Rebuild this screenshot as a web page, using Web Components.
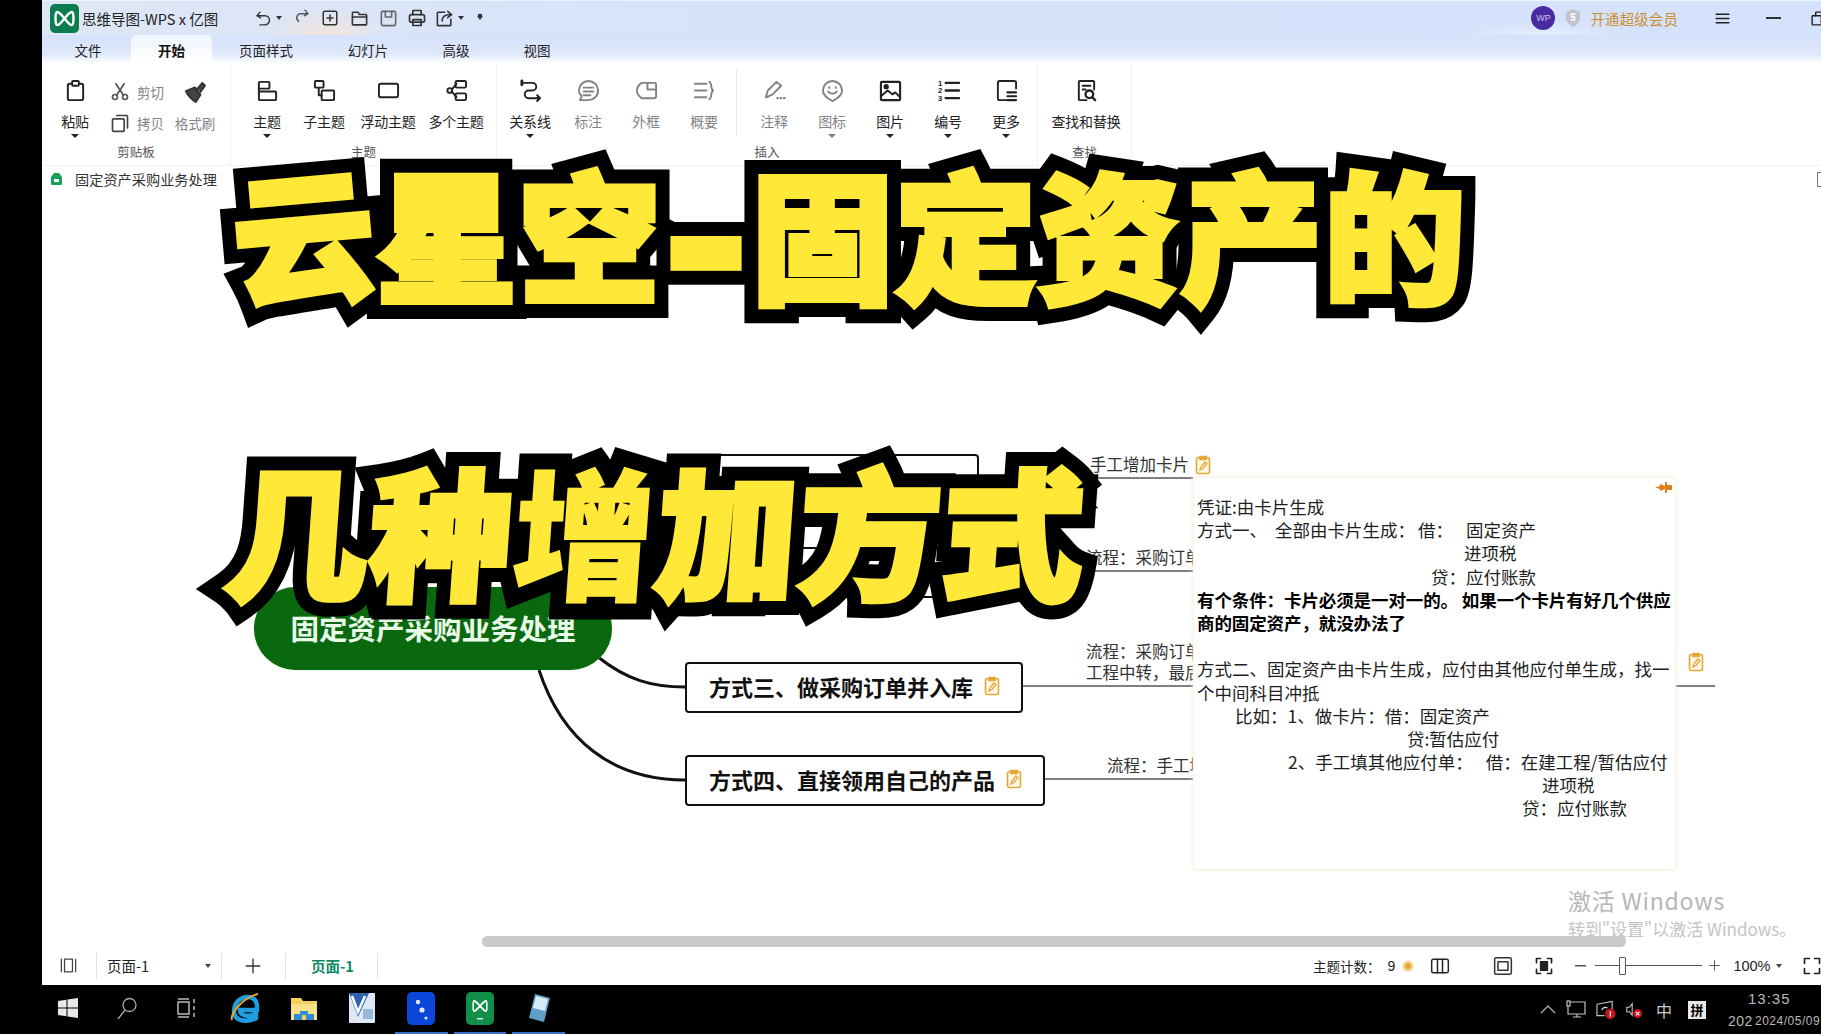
<!DOCTYPE html>
<html lang="zh">
<head>
<meta charset="utf-8">
<title>思维导图</title>
<style>
  html, body { margin: 0; height: 100%; background: #000; overflow: hidden; }
  body { font-family: "Noto Sans CJK SC", "Noto Sans", sans-serif; color: #222; }
</style>
</head>
<body>
<app-shell>
  <title-bar slot="top"></title-bar>
  <ribbon-tabs slot="top" active="开始"></ribbon-tabs>
  <ribbon-bar slot="top">
    <rb-group label="剪贴板" w="188" pad="0">
      <rb-btn w="64" icon="paste" label="粘贴" arrow style="margin-left:1px"></rb-btn>
      <clip-tools></clip-tools>
    </rb-group>
    <rb-group label="主题" w="266" pad="8" sep>
      <rb-btn w="56" icon="topic" label="主题" arrow></rb-btn>
      <rb-btn w="58" icon="subtopic" label="子主题"></rb-btn>
      <rb-btn w="70" icon="float" label="浮动主题"></rb-btn>
      <rb-btn w="66" icon="multi" label="多个主题"></rb-btn>
    </rb-group>
    <rb-group label="插入" w="541" pad="4" sep>
      <rb-btn w="58" icon="relation" label="关系线" arrow></rb-btn>
      <rb-btn w="58" icon="callout" label="标注" grey></rb-btn>
      <rb-btn w="58" icon="frame" label="外框" grey></rb-btn>
      <rb-btn w="58" icon="summary" label="概要" grey></rb-btn>
      <i class="rule"></i>
      <rb-btn w="58" icon="note" label="注释" grey></rb-btn>
      <rb-btn w="58" icon="pin" label="图标" grey arrow></rb-btn>
      <rb-btn w="58" icon="image" label="图片" arrow></rb-btn>
      <rb-btn w="58" icon="number" label="编号" arrow></rb-btn>
      <rb-btn w="58" icon="more" label="更多" arrow></rb-btn>
    </rb-group>
    <rb-group label="查找" w="95" pad="8" sep end>
      <rb-btn w="80" icon="find" label="查找和替换"></rb-btn>
    </rb-group>
  </ribbon-bar>
  <doc-tab slot="top">固定资产采购业务处理</doc-tab>
  <map-canvas slot="top"></map-canvas>
  <status-bar slot="top"></status-bar>
  <task-bar slot="bottom"></task-bar>
  <big-headline slot="over" text="云星空-固定资产的" x="232" y="143" step="143" tilt="-5"></big-headline>
  <big-headline slot="over" text="几种增加方式" x="221" y="440" step="143" skew="-4"></big-headline>
</app-shell>

<script>
const CJK = '"Noto Sans CJK SC", "Noto Sans", sans-serif';

// icons, all on a 24 box
const ICONS = {
  paste: '<rect x="4" y="5" width="16" height="17" rx="2"/><rect x="8.5" y="2" width="7" height="5" rx="1" fill="#fff"/>',
  cut: '<circle cx="6" cy="18" r="3"/><circle cx="18" cy="18" r="3"/><path d="M8 15.5 17 2M16 15.5 7 2"/>',
  copy: '<rect x="3" y="7" width="14" height="15" rx="1"/><path d="M8 3h12a1 1 0 0 1 1 1v14"/>',
  brush: '<path d="M2 11 12 7l6 8-5 8c-3-1-9-7-11-12z" fill="currentColor"/><path d="m14 9 6-7 3 3-5 7" fill="currentColor"/>',
  topic: '<rect x="3" y="3" width="11" height="7" rx="1"/><path d="M3 10v5"/><rect x="3" y="13" width="18" height="9" rx="1"/>',
  subtopic: '<rect x="2" y="2" width="9" height="7" rx="1"/><path d="M6 9v8h3"/><rect x="9" y="12" width="13" height="10" rx="1"/>',
  float: '<rect x="2" y="5" width="20" height="14" rx="2"/>',
  multi: '<circle cx="5" cy="12" r="2.5"/><path d="M7 11l5-6M7 13l5 6"/><rect x="11" y="2" width="11" height="7" rx="1.5"/><rect x="11" y="15" width="11" height="7" rx="1.5"/>',
  relation: '<path d="M3 4h11a4 4 0 0 1 0 8h-4a4 4 0 0 0 0 8h11"/><path d="M3 2v4" stroke-width="3"/><path d="m19 17 3 3-3 3" fill="currentColor"/>',
  callout: '<path d="M12 2a10 10 0 0 1 10 10c0 6-5 10-10 10H3l2-4C3 16 2 14 2 12A10 10 0 0 1 12 2z"/><path d="M7 9h10M7 13h10M7 17h7"/>',
  frame: '<path d="M7 4h13a2 2 0 0 1 2 2v12a2 2 0 0 1-2 2H7c-3-2-5-5-5-8s2-6 5-8z"/><path d="M13 4v7h9"/>',
  summary: '<path d="M2 5h12M2 12h12M2 19h12M17 3c3 0 1 8 4 9-3 1-1 9-4 9"/>',
  note: '<path d="M3 19l2-7L14 3l5 4-9 9-6 3z"/><path d="M15 20h.5M18.5 20h.5M22 20h.5" stroke-width="2.4"/>',
  pin: '<path d="M12 2a10 10 0 0 1 10 10c0 5-6 9-10 11C8 21 2 17 2 12A10 10 0 0 1 12 2z"/><path d="M7.5 13c2 3 7 3 9 0"/><path d="M8.5 8.5v1M15.5 8.5v1"/>',
  image: '<rect x="2" y="3" width="20" height="19" rx="1" stroke-width="2.2"/><circle cx="7.5" cy="8" r="1.8" fill="currentColor"/><path d="M2 18l7-6 5 4 3-2 5 5"/>',
  number: '<path d="M9 4h14M9 12h14M9 20h14" stroke-width="2.4"/><text x="1" y="7" font-size="8" font-weight="700" fill="currentColor" stroke="none" font-family="Liberation Sans">1</text><text x="1" y="15" font-size="8" font-weight="700" fill="currentColor" stroke="none" font-family="Liberation Sans">2</text><text x="1" y="23" font-size="8" font-weight="700" fill="currentColor" stroke="none" font-family="Liberation Sans">3</text>',
  more: '<path d="M22 10V4a2 2 0 0 0-2-2H5a2 2 0 0 0-2 2v16a2 2 0 0 0 2 2h7"/><path d="M13 14h9M13 18h9M13 22h9" stroke-width="2.2"/>',
  find: '<path d="M12 22H5a1 1 0 0 1-1-1V3a1 1 0 0 1 1-1h14a1 1 0 0 1 1 1v8"/><path d="M8 7h8M8 11h3"/><circle cx="15" cy="16" r="4" stroke-width="2.4"/><path d="m18 19 3 3" stroke-width="2.4"/>',
  undo: '<path d="M7 3 3 8l5 3"/><path d="M3 8h11a6 6 0 0 1 0 13H7"/>',
  redo: '<path d="M17 3l4 5-5 3"/><path d="M21 8H11a6 6 0 0 0-3 11"/>',
  addbox: '<rect x="3" y="3" width="18" height="18" rx="2"/><path d="M12 8v8M8 12h8"/>',
  folder: '<path d="M3 8V5a1 1 0 0 1 1-1h6l2 3h8a1 1 0 0 1 1 1v11a1 1 0 0 1-1 1H4a1 1 0 0 1-1-1z"/><path d="M3 10h18"/>',
  save: '<rect x="3" y="3" width="18" height="18" rx="2"/><path d="M8 3v7h8V3"/>',
  print: '<path d="M7 8V3h10v5"/><rect x="3" y="8" width="18" height="9" rx="2"/><rect x="7" y="14" width="10" height="7"/>',
  share: '<path d="M12 4H4a1 1 0 0 0-1 1v15a1 1 0 0 0 1 1h15a1 1 0 0 0 1-1v-7"/><path d="M9 15c0-5 4-8 11-8M16 3l5 4-5 4"/>',
  menu: '<path d="M3 6h18M3 12h18M3 18h18"/>',
  restore: '<rect x="3" y="8" width="13" height="13" rx="1"/><path d="M8 8V4a1 1 0 0 1 1-1h11a1 1 0 0 1 1 1v11a1 1 0 0 1-1 1h-4"/>',
  pages: '<path d="M3 4v16M21 4v16"/><rect x="7" y="4" width="10" height="16"/>',
  plus: '<path d="M12 3v18M3 12h18"/>',
  book: '<rect x="2" y="4" width="20" height="16" rx="2"/><path d="M9 4v16M15 4v16"/>',
  fit: '<rect x="2" y="2" width="20" height="20" rx="2"/><rect x="6" y="7" width="12" height="10"/>',
  focus: '<path d="M3 8V3h5M16 3h5v5M21 16v5h-5M8 21H3v-5"/><rect x="8" y="7" width="8" height="10" fill="currentColor"/>',
  full: '<path d="M3 9V3h6M15 3h6v6M21 15v6h-6M9 21H3v-6"/>'
};

function def(name, css, html, extra) {
  customElements.define(name, class extends HTMLElement {
    constructor() {
      super();
      this.attachShadow({ mode: 'open' });
    }
    connectedCallback() {
      const body = typeof html === 'function' ? html(this) : html;
      this.shadowRoot.innerHTML = `<style>${css}</style>${body}`;
      if (extra) extra(this);
    }
  });
}

function ico(name, size, color, sw) {
  return `<svg width="${size}" height="${size}" viewBox="0 0 24 24" fill="none" stroke="${color || 'currentColor'}" stroke-width="${sw || 2}" stroke-linecap="round" stroke-linejoin="round">${ICONS[name]}</svg>`;
}

const NOTE_ICON = `<svg width="16" height="20" viewBox="0 0 16 20" fill="#fff8e6" stroke="#e2a83a" stroke-width="1.6"><rect x="1.5" y="2.5" width="13" height="16" rx="2"/><path d="M5 1.5h6v3H5z" fill="#e2a83a"/><path d="m5 15 1-3 4-5 2 1.5-4 5z" fill="none" stroke-width="1.3"/></svg>`;

def('app-shell', `
  :host { display: grid; grid-template-columns: 42px 1fr; grid-template-rows: 985px 49px; width: 1821px; height: 1034px; position: relative; overflow: hidden; background: #000; }
  .main { grid-column: 2; display: flex; flex-direction: column; background: #fff; min-height: 0; }
  .bottom { grid-column: 1 / 3; min-width: 0; }
`, `<div class="main"><slot name="top"></slot></div><div class="bottom"><slot name="bottom"></slot></div><slot name="over"></slot>`);

def('title-bar', `
  :host { display: flex; align-items: center; height: 35px; flex: none; font: 14.5px ${CJK}; color: #222;
    background:
      radial-gradient(ellipse 60px 26px at 285px 34px, #f3e5dc 0, transparent 100%),
      radial-gradient(ellipse 90px 22px at 1500px 40px, #eaf1fd 0, transparent 100%),
      linear-gradient(90deg, #dde7f5, #d8e2fb 40%, #d5e2fb);
    border-top: 1px solid #edf2fc; box-sizing: border-box; }
  .logo { width: 29px; height: 29px; margin-left: 8px; flex: none; }
  .name { margin-left: 3px; width: 139px; white-space: nowrap; }
  .tools { display: flex; align-items: center; margin-left: 34px; color: #333; }
  .tools > * { flex: none; }
  .caret { width: 0; height: 0; border: 3.5px solid transparent; border-top: 4px solid #333; border-bottom: 0; margin-left: 4px; }
  .right { margin-left: auto; display: flex; align-items: center; color: #222; }
  .wp { width: 24px; height: 24px; border-radius: 50%; background: #4a2aa3; color: #cfc2ee; font: 9px "Liberation Sans", sans-serif; display: flex; align-items: center; justify-content: center; }
  .shield { width: 16px; height: 18px; margin-left: 10px; }
  .vip { color: #cd8f33; margin-left: 9px; font-size: 14.4px; letter-spacing: .2px; white-space: nowrap; }
`, `
  <svg class="logo" viewBox="0 0 29 29"><rect width="29" height="29" rx="5" fill="#0c7d4f"/><path d="M7 8c3 0 5 4 7.500 6.500C12 17 10 21 7 21c-2 0-2-13 0-13zM22 8c-3 0-5 4-7.500 6.500C17 17 19 21 22 21c2 0 2-13 0-13z" fill="none" stroke="#fff" stroke-width="2.400"/></svg>
  <span class="name">思维导图-WPS x 亿图</span>
  <div class="tools">
    ${ico('undo', 17)}<i class="caret"></i>
    <span style="margin-left:11px">${ico('redo', 17, '#555')}</span>
    <span style="margin-left:11px;display:flex">${ico('addbox', 18)}</span>
    <span style="margin-left:11px;display:flex">${ico('folder', 19)}</span>
    <span style="margin-left:10px;display:flex">${ico('save', 19, '#666')}</span>
    <span style="margin-left:9px;display:flex">${ico('print', 20)}</span>
    <span style="margin-left:8px;display:flex">${ico('share', 19)}</span><i class="caret"></i>
    <i class="caret" style="margin-left:13px;box-shadow:0 -3px 0 -1px #333"></i>
  </div>
  <div class="right">
    <span class="wp">WP</span>
    <svg class="shield" viewBox="0 0 16 18"><path d="M8 0l7 3v6c0 4-3 7-7 9-4-2-7-5-7-9V3z" fill="#bfc4cc"/><path d="M10.500 5H6.500v3h3v3H5.500" fill="none" stroke="#fff" stroke-width="1.500"/></svg>
    <span class="vip">开通超级会员</span>
    <span style="margin-left:36px;display:flex">${ico('menu', 17)}</span>
    <span style="margin-left:35px;display:flex"><svg width="15" height="2"><rect width="15" height="2" fill="#333"/></svg></span>
    <span style="margin-left:29px;margin-right:-6px;display:flex">${ico('restore', 17)}</span>
  </div>
`);

def('ribbon-tabs', `
  :host { display: flex; height: 27px; flex: none; padding-left: 3px; font: 13.5px ${CJK}; color: #222; background: linear-gradient(#d5e2fb, #dfe8fb 70%, #f8fafe); }
  span { display: flex; align-items: center; justify-content: center; padding-top: 2px; box-sizing: border-box; }
  .on { background: linear-gradient(#eef3fd, #fff); border-radius: 5px 5px 0 0; font-weight: 700; color: #111; }
`, (el) => {
  const tabs = [['文件', 86], ['开始', 81], ['页面样式', 108], ['幻灯片', 96], ['高级', 80], ['视图', 82]];
  return tabs.map(([t, w]) => `<span style="width:${w}px" class="${t === el.getAttribute('active') ? 'on' : ''}">${t}</span>`).join('');
});

def('ribbon-bar', `
  :host { display: flex; height: 103px; flex: none; background: #fff; align-items: stretch; }
`, `<slot></slot>`);

def('rb-group', `
  :host { display: flex; flex-direction: column; flex: none; box-sizing: border-box; position: relative; }
  :host([sep]) { border-left: 1px solid #eef0f2; }
  :host([end]) { border-right: 1px solid #eef0f2; }
  .row { display: flex; flex: 1; min-height: 0; align-items: flex-start; }
  .cap { text-align: center; font-size: 12.5px; line-height: 16px; color: #555; height: 18px; margin-bottom: 3px; }
  ::slotted(.rule) { width: 1px; height: 66px; margin: 8px 8px 0 3px; background: #e6e8ea; flex: none; }
`, (el) => `
  <div class="row" style="padding-left:${el.getAttribute('pad')}px"><slot></slot></div>
  <div class="cap">${el.getAttribute('label')}</div>
`, (el) => { el.style.width = el.getAttribute('w') + 'px'; });

def('rb-btn', `
  :host { display: flex; flex-direction: column; align-items: center; flex: none; font: 14px ${CJK}; color: #222; padding-top: 17px; }
  :host([grey]) { color: #808488; }
  .lb { margin-top: 8px; line-height: 22px; white-space: nowrap; letter-spacing: -.2px; }
  svg { display: block; }
  .ar { width: 0; height: 0; border: 4px solid transparent; border-top: 4px solid currentColor; border-bottom: 0; margin-top: 2px; }
`, (el) => `
  ${ico(el.getAttribute('icon'), 23)}
  <span class="lb">${el.getAttribute('label')}</span>
  ${el.hasAttribute('arrow') ? '<i class="ar"></i>' : ''}
`, (el) => { el.style.width = el.getAttribute('w') + 'px'; });

def('clip-tools', `
  :host { display: grid; grid-template-columns: 60px 60px; grid-template-rows: 31px 31px; width: 120px; flex: none; font: 13.5px ${CJK}; color: #808488; padding-top: 14px; }
  div { display: flex; align-items: center; gap: 7px; white-space: nowrap; }
  .m { color: #555; display: flex; }
`, `
  <div style="padding-left:3px"><span class="m">${ico('cut', 20, '#555')}</span><span>剪切</span></div>
  <div style="justify-content:center;margin-right:4px;color:#444">${ico('brush', 22, '#333')}</div>
  <div style="padding-left:3px"><span class="m">${ico('copy', 20, '#444')}</span><span>拷贝</span></div>
  <div style="justify-content:center;margin-right:4px">格式刷</div>
`);

def('doc-tab', `
  :host { display: flex; align-items: center; height: 27px; flex: none; border-top: 1px solid #f2f2f2; box-sizing: border-box; font: 14.2px ${CJK}; color: #333; background: #fff; }
  svg { margin-left: 9px; margin-right: 13px; }
  .end { margin-left: auto; width: 3px; height: 13px; border: 1px solid #777; border-right: 0; }
`, `
  <svg width="11" height="12" viewBox="0 0 11 12"><path d="M3 0h5l3 4v7a1 1 0 0 1-1 1H1a1 1 0 0 1-1-1V4z" fill="#18a058"/><rect x="3" y="6" width="5" height="3" fill="#fff"/></svg>
  <slot></slot><i class="end"></i>
`);

def('map-canvas', `
  :host { display: block; position: relative; flex: 1; min-height: 0; background: #fff; overflow: hidden; font-family: ${CJK}; color: #222; }
  svg.lines { position: absolute; left: 0; top: 0; }
  .root { position: absolute; left: 212px; top: 395px; width: 358px; height: 83px; box-sizing: border-box; border-radius: 42px; background: #0a680e; color: #e9fbe9; font-size: 28.500px; font-weight: 700; display: flex; align-items: center; justify-content: center; white-space: nowrap; box-shadow: 0 0 1px #7ad07a; padding-bottom: 3px; }
  .node { position: absolute; left: 643px; height: 51px; box-sizing: border-box; border: 2.500px solid #111; border-radius: 4px; background: #fff; font-size: 22px; font-weight: 700; color: #111; display: flex; align-items: center; padding: 0 0 3px 22px; gap: 11px; white-space: nowrap; }
  .tx { position: absolute; font-size: 16.500px; line-height: 21px; color: #333; white-space: nowrap; }
  .ni { position: absolute; display: block; }
  .wm { position: absolute; left: 1526px; color: #b4b6b8; white-space: nowrap; }
  .bar { position: absolute; left: 440px; top: 744px; width: 1144px; height: 11px; border-radius: 6px; background: #c9c9c9; }
`, `
  <svg class="lines" width="1779" height="760" fill="none" stroke="#111">
    <path d="M556 465C585 488 610 495 643 495" stroke-width="3"/>
    <path d="M497 478C520 548 570 588 643 588" stroke-width="3"/>
    <path d="M937 286H1152M905 379H1152M981 494H1673M1003 587H1152" stroke="#555" stroke-width="1.500"/>
  </svg>
  <div class="node" style="top:262px;width:294px"></div>
  <div class="node" style="top:355px;width:262px"></div>
  <div class="node" style="top:470px;width:338px">方式三、做采购订单并入库${NOTE_ICON}</div>
  <div class="node" style="top:563px;width:360px">方式四、直接领用自己的产品${NOTE_ICON}</div>
  <div class="root">固定资产采购业务处理</div>
  <div class="tx" style="left:1048px;top:262px">手工增加卡片</div><span class="ni" style="left:1153px;top:263px">${NOTE_ICON}</span>
  <div class="tx" style="left:1044px;top:355px">流程：采购订单</div>
  <div class="tx" style="left:1044px;top:449px">流程：采购订单<br>工程中转，最后</div><span class="ni" style="left:1646px;top:460px">${NOTE_ICON}</span>
  <div class="tx" style="left:1065px;top:563px">流程：手工填</div>
  <div class="wm" style="top:693px;font-size:23px;line-height:30px;letter-spacing:.8px">激活 Windows</div>
  <div class="wm" style="top:726px;font-size:17px;line-height:21px;color:#c2c4c6">转到"设置"以激活 Windows。</div>
  <div class="bar"></div>
  <note-pop></note-pop>
`);

def('note-pop', `
  :host { position: absolute; left: 1151px; top: 285px; width: 483px; height: 393px; box-sizing: border-box; background: #fff; border: 1px solid #fbf5e6; box-shadow: 0 0 4px #f5ecd6; padding: 17px 0 0 3px; font: 17.500px/23.200px ${CJK}; color: #1e1e1e; }
  div { white-space: pre; height: 23.200px; }
  .b { font-weight: 700; color: #000; letter-spacing: -.1px; }
  svg { position: absolute; right: 3px; top: 3px; }
`, `
  <svg width="17" height="13" viewBox="0 0 17 13" fill="#e0801c"><path d="M0 6.500 5 5V3l5 2V1h2v3l5 0v5h-5v3h-2V8L5 10V8z"/></svg>
  <div>凭证:由卡片生成</div>
  <div>方式一、<span style="margin-left:8px">全部由卡片生成：</span><span style="margin-left:3px">借：</span><span style="margin-left:13px">固定资产</span></div>
  <div style="padding-left:267px">进项税</div>
  <div style="padding-left:234px">贷：应付账款</div>
  <div class="b">有个条件：卡片必须是一对一的。 如果一个卡片有好几个供应</div>
  <div class="b">商的固定资产，就没办法了</div>
  <div></div>
  <div>方式二、固定资产由卡片生成，应付由其他应付单生成，找一</div>
  <div>个中间科目冲抵</div>
  <div style="padding-left:38px">比如：1、做卡片：借：固定资产</div>
  <div style="padding-left:210px">贷:暂估应付</div>
  <div style="padding-left:91px">2、手工填其他应付单：<span style="margin-left:13px">借：在建工程/暂估应付</span></div>
  <div style="padding-left:345px">进项税</div>
  <div style="padding-left:325px">贷：应付账款</div>
`);

def('status-bar', `
  :host { display: flex; align-items: center; height: 33px; padding-bottom: 6px; box-sizing: border-box; flex: none; background: #fff; font: 14.5px ${CJK}; color: #222; }
  .s { width: 1px; height: 26px; background: #e3e3e3; flex: none; }
  .l { display: flex; align-items: center; height: 100%; }
  .r { display: flex; align-items: center; margin-left: auto; }
  .r svg, .l svg { display: block; flex: none; }
  .c { width: 0; height: 0; border: 3.500px solid transparent; border-top: 4px solid #444; border-bottom: 0; }
  .sl { width: 107px; height: 1.500px; background: #555; margin-left: 9px; position: relative; }
  .sl i { position: absolute; left: 24px; top: -8px; width: 5px; height: 16px; border: 1px solid #555; background: #fff; border-radius: 1px; }
  .cur { color: #0f8a66; font-weight: 700; }
`, `
  <div class="l">
    <span style="margin-left:17px">${ico('pages', 19, '#444', 1.6)}</span>
    <i class="s" style="margin-left:18px"></i>
    <span style="margin-left:10px;width:98px">页面-1</span><i class="c"></i>
    <i class="s" style="margin-left:10px"></i>
    <span style="margin-left:22px">${ico('plus', 18, '#333', 1.8)}</span>
    <i class="s" style="margin-left:23px"></i>
    <span class="cur" style="margin-left:25px;width:50px">页面-1</span>
    <i class="s" style="margin-left:16px"></i>
  </div>
  <div class="r">
    <span style="white-space:nowrap;font-size:13.500px">主题计数：</span>
    <span style="margin-left:7px;font-family:'Liberation Sans',sans-serif;font-size:14px">9</span>
    <svg style="margin-left:7px" width="12" height="12" viewBox="0 0 12 12"><circle cx="6" cy="6" r="5.500" fill="#f4d58a"/><circle cx="6" cy="6" r="3" fill="#e2a83a"/></svg>
    <span style="margin-left:15.500px">${ico('book', 20, '#222', 1.8)}</span>
    <span style="margin-left:43.500px">${ico('fit', 20, '#333', 1.8)}</span>
    <span style="margin-left:20.500px">${ico('focus', 20, '#222', 2)}</span>
    <svg style="margin-left:21.500px" width="11" height="2"><rect width="11" height="1.500" fill="#555"/></svg>
    <div class="sl"><i></i></div>
    <span style="margin-left:6px">${ico('plus', 13, '#444', 1.6)}</span>
    <span style="margin-left:12px;font-family:'Liberation Sans',sans-serif;font-size:14.500px;white-space:nowrap">100%</span>
    <i class="c" style="margin-left:5px"></i>
    <span style="margin-left:20.500px;margin-right:-1px">${ico('full', 20, '#222', 2)}</span>
  </div>
`);

def('task-bar', `
  :host { display: flex; align-items: center; height: 49px; background: #000; color: #c9c9c9; position: relative; font-family: ${CJK}; }
  .apps { display: flex; margin-left: 39px; height: 100%; }
  .app { width: 58.800px; height: 100%; display: flex; align-items: center; justify-content: center; box-sizing: border-box; padding-bottom: 3px; }
  .app.on { border-bottom: 2px solid #3b6fc4; margin: 0 3px; width: 52.800px; padding-bottom: 1px; }
  .tray { margin-left: auto; display: flex; align-items: center; height: 100%; }
  .tray > span { display: flex; align-items: center; justify-content: center; flex: none; }
  .clock { width: 93px; margin-left: 22px; flex: none; display: flex; flex-direction: column; font-size: 12px; line-height: 22px; white-space: nowrap; overflow: hidden; color: #b9b9b9; letter-spacing: .5px; font-family: "Liberation Sans", sans-serif; }
  .clock .t { padding-left: 20px; font-size: 15px; letter-spacing: 1px; }
  .clock .d { display: flex; }
  .clock .d b { font-weight: 400; width: 27px; overflow: hidden; font-size: 14px; flex: none; }
`, `
  <div class="apps">
    <div class="app"><svg width="20" height="20" viewBox="0 0 20 20" fill="#e9e9e9"><path d="M0 3l8.500-1.200V9.500H0zM9.500 1.600 20 0v9.500H9.500zM0 10.500h8.500v7.700L0 17zM9.500 10.500H20V20L9.500 18.400z"/></svg></div>
    <div class="app"><svg width="22" height="24" viewBox="0 0 22 24" fill="none" stroke="#aaa" stroke-width="1.300"><circle cx="13.500" cy="9" r="6.500"/><path d="M9 14 2 23"/></svg></div>
    <div class="app"><svg width="22" height="20" viewBox="0 0 22 20" fill="none" stroke="#bbb" stroke-width="1.500"><rect x="3" y="4" width="11" height="12"/><path d="M3 1h11M3 19h11M19 1v4M19 8v4M19 15v4"/></svg></div>
    <div class="app"><svg width="30" height="32" viewBox="0 0 30 32"><path d="M4 20C4 11 10 5 18 5c6 0 9 4 9 10v3H10c0 6 10 8 16 3v5c-8 5-22 3-22-6z" fill="none" stroke="#1e9ee0" stroke-width="4.500"/><path d="M2 28C0 22 12 6 28 2" fill="none" stroke="#e6a82a" stroke-width="2"/></svg></div>
    <div class="app"><svg width="26" height="26" viewBox="0 0 26 26"><path d="M0 3h10l2 3h14v19H0z" fill="#f3cf5c"/><path d="M0 9h26v16H0z" fill="#fbe08a"/><rect x="3" y="19" width="20" height="6" fill="#2b8fd6"/><rect x="9" y="16" width="8" height="9" fill="#2b8fd6"/><rect x="11" y="20" width="4" height="5" fill="#f3cf5c"/></svg></div>
    <div class="app"><svg width="26" height="30" viewBox="0 0 26 30"><rect width="26" height="30" rx="1" fill="#dfe8f5"/><path d="M0 0h20L9 24z" fill="#2c62ae"/><path d="M3 3l6 16 7-16" fill="none" stroke="#fff" stroke-width="2.500"/><path d="M14 16h10v10H14z" fill="#9ab7dc"/></svg></div>
    <div class="app on"><svg width="28" height="33" viewBox="0 0 28 33"><rect width="28" height="33" rx="5" fill="#0c46d8"/><circle cx="11" cy="10" r="2.200" fill="#dfe8ff"/><circle cx="15" cy="18" r="2.600" fill="#dfe8ff"/><circle cx="19" cy="26" r="1.600" fill="#dfe8ff"/></svg></div>
    <div class="app on"><svg width="28" height="33" viewBox="0 0 28 33"><rect width="28" height="33" rx="5" fill="#0f8f48"/><path d="M8 9c2 0 4 3 6 5-2 2-4 5-6 5-1 0-1-10 0-10zM20 9c-2 0-4 3-6 5 2 2 4 5 6 5 1 0 1-10 0-10z" fill="none" stroke="#fff" stroke-width="1.800"/><rect x="11" y="26" width="6" height="1.500" fill="#cfe"/></svg></div>
    <div class="app on"><svg width="24" height="30" viewBox="0 0 24 30"><path d="M8 1l15 4-6 24-15-4z" fill="#5f9fc7"/><path d="M9 3l12 3-3 12-12-3z" fill="#d5edf7"/></svg></div>
  </div>
  <div class="tray">
    <span style="width:18px"><svg width="16" height="9" viewBox="0 0 16 9" fill="none" stroke="#bbb" stroke-width="1.200"><path d="M1 8l7-7 7 7"/></svg></span>
    <span style="width:20px;margin-left:9px"><svg width="20" height="19" viewBox="0 0 20 19" fill="none" stroke="#c4c4c4" stroke-width="1.200"><path d="M4 2h15v12H2V6"/><path d="M7 17h8M11 14v3"/><rect x="1" y="1" width="3" height="5"/></svg></span>
    <span style="width:20px;margin-left:10px"><svg width="21" height="21" viewBox="0 0 21 21" fill="none" stroke="#c4c4c4" stroke-width="1.200"><path d="M1 5l16-3v13"/><path d="M1 5v12h8"/><circle cx="15" cy="15" r="5.500" fill="#c8141b" stroke="none"/><path d="M15 12v6" stroke="#fff"/><path d="M6 11a4 4 0 0 1 6-2" stroke="#ddd"/></svg></span>
    <span style="width:18px;margin-left:9px"><svg width="20" height="20" viewBox="0 0 20 20" fill="none" stroke="#c4c4c4" stroke-width="1.200"><path d="M2 7h3l3-4v13l-3-4H2z"/><circle cx="14" cy="14" r="5" fill="#c8141b" stroke="none"/><path d="m12 12 4 4m0-4-4 4" stroke="#fff"/></svg></span>
    <span style="width:18px;margin-left:12px;font-size:16px;color:#c9c9c9">中</span>
    <span style="width:18px;height:18px;margin-left:15px;background:#e9e9e9;color:#000;font-size:13px;font-weight:700;line-height:18px">拼</span>
    <div class="clock"><span class="t">13:35</span><span class="d"><b>202</b>2024/05/09</span></div>
  </div>
`);

// big caption over the whole window, outline drawn by a ::before per glyph
def('big-headline', `
  :host { position: absolute; display: block; white-space: nowrap; font-family: ${CJK}; font-weight: 900; font-size: 141px; line-height: 176px; isolation: isolate; }
  .w { display: flex; transform-origin: left bottom; }
  span { position: relative; display: block; text-align: center; color: #ffe838; -webkit-text-stroke: 6px #ffe838; }
  span::before { content: attr(data-c); position: absolute; left: 0; right: 0; top: 0; z-index: -1; color: #000; -webkit-text-stroke: 34px #000; }
  .dash { font-size: 230px; top: -11px; }
  .thin { -webkit-text-stroke: 2px #ffe838; }
`, (el) => {
  const step = el.getAttribute('step');
  const tilt = el.getAttribute('tilt');
  const chars = [...el.getAttribute('text')].map((c, i) => {
    const rot = i === 0 && tilt ? `transform:rotate(${tilt}deg);` : '';
    const cls = c === '-' ? 'dash' : c === '增' ? 'thin' : '';
    return `<span class="${cls}" style="${rot}width:${c === '-' ? 90 : step}px" data-c="${c}">${c}</span>`;
  }).join('');
  return `<div class="w" style="transform:skewX(${el.getAttribute('skew') || 0}deg)">${chars}</div>`;
}, (el) => {
  el.style.left = el.getAttribute('x') + 'px';
  el.style.top = el.getAttribute('y') + 'px';
});
</script>
</body>
</html>
